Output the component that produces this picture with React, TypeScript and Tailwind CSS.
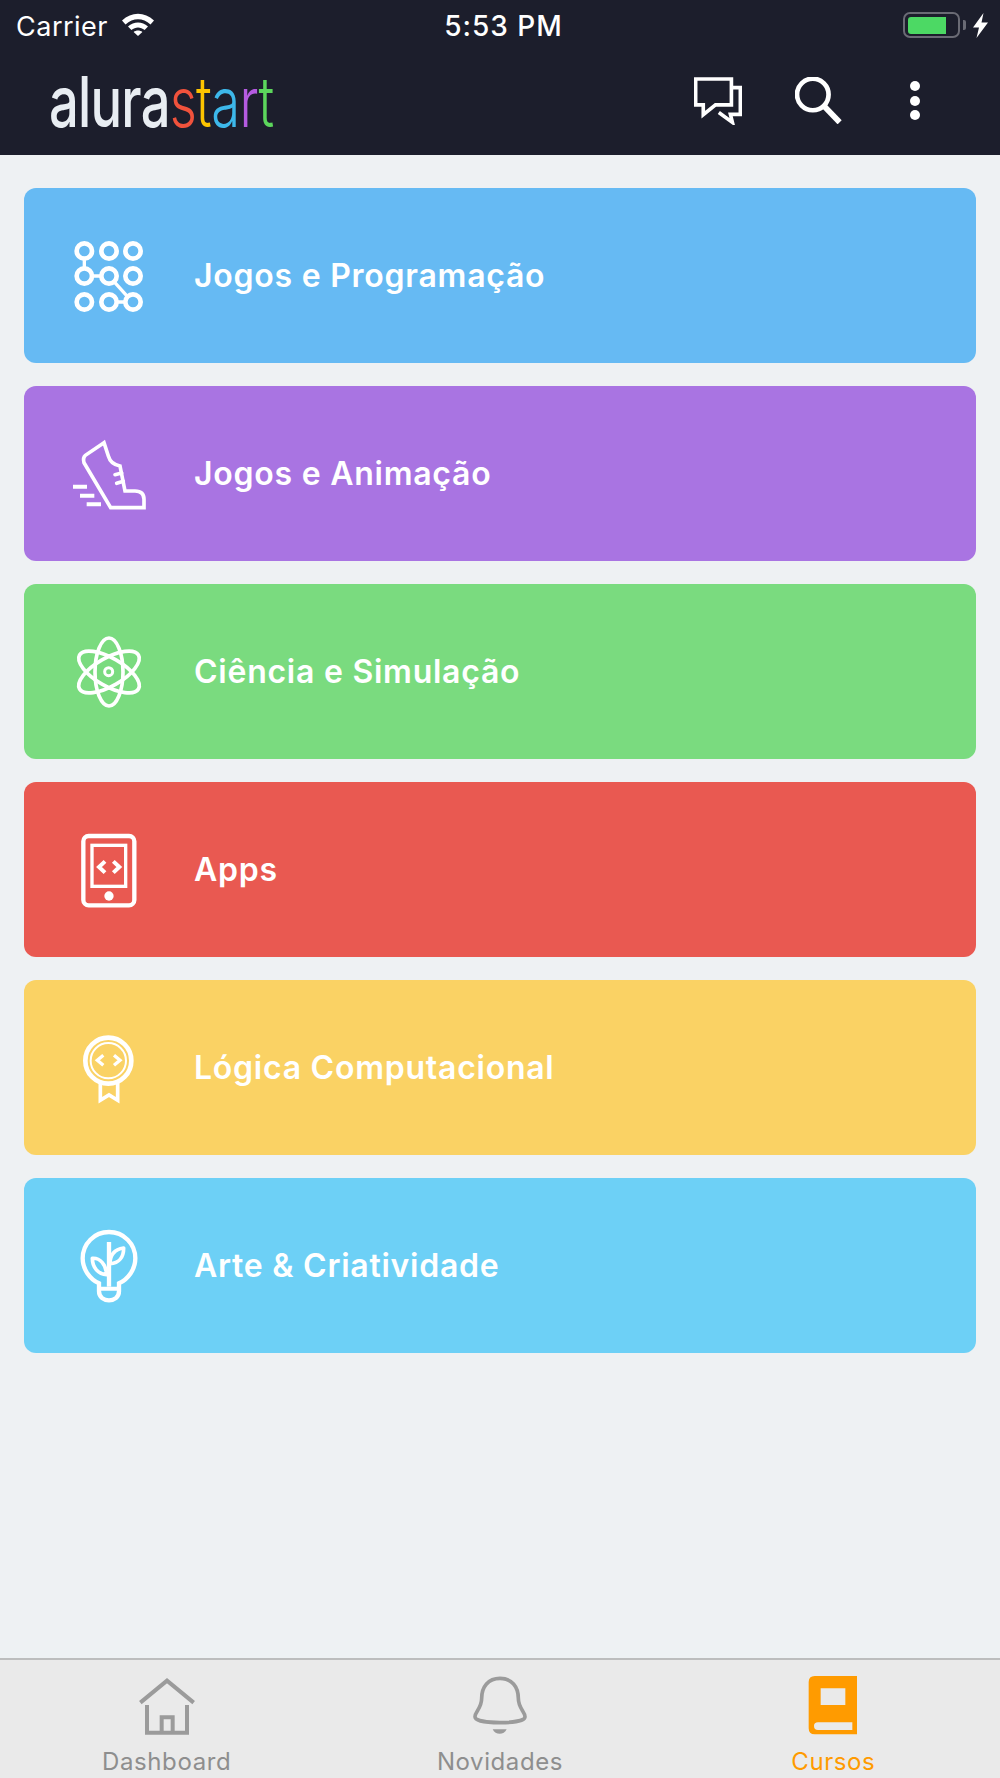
import React from "react";

const white = { fill: "none", stroke: "#fff", strokeLinejoin: "round" as const, strokeLinecap: "round" as const };

function Icon({ y, children }: { y: number; children: React.ReactNode }) {
  return (
    <svg viewBox={`87 ${y} 240 240`} className="w-20 h-20 shrink-0 overflow-visible">
      {children}
    </svg>
  );
}

const IconPattern = () => (
  <Icon y={45}>
    <g {...white} strokeWidth={14}>
      <circle cx={133} cy={90} r={23} />
      <circle cx={207} cy={90} r={23} />
      <circle cx={279} cy={90} r={23} />
      <circle cx={133} cy={165} r={23} />
      <circle cx={207} cy={165} r={23} />
      <circle cx={279} cy={165} r={23} />
      <circle cx={133} cy={243} r={23} />
      <circle cx={207} cy={243} r={23} />
      <circle cx={279} cy={243} r={23} />
      <path d="M133 113V142M156 165H184M222 182L262 226M230 243H256" strokeWidth={10} />
    </g>
  </Icon>
);

const IconShoe = () => (
  <Icon y={39}>
    <g {...white} strokeWidth={11}>
      <path d="M192 65L136 103Q128 110 132 125L212 260H312V235Q312 210 285 210H255L240 135Q212 130 205 105Z" strokeLinejoin="miter" />
      <path d="M225 161L245 156M230 187L250 181" />
      <path d="M99 197H141M120 224H163M140 250H183" strokeLinecap="butt" strokeWidth={12} />
    </g>
  </Icon>
);

const IconAtom = () => (
  <Icon y={33}>
    <g {...white} strokeWidth={11}>
      <ellipse cx={207} cy={153} rx={42} ry={102} />
      <ellipse cx={207} cy={153} rx={42} ry={102} transform="rotate(60 207 153)" />
      <ellipse cx={207} cy={153} rx={42} ry={102} transform="rotate(-60 207 153)" />
      <circle cx={206} cy={152} r={12} strokeWidth={9} />
    </g>
  </Icon>
);

const IconTablet = () => (
  <Icon y={27}>
    <g {...white} strokeWidth={13}>
      <rect x={130} y={45} width={153} height={208} rx={16} />
      <rect x={156} y={73} width={101} height={123} strokeWidth={10} strokeLinejoin="miter" />
      <path d="M195 121L177 138L195 155M220 121L238 138L220 155" strokeWidth={12} strokeLinecap="butt" strokeLinejoin="miter" />
    </g>
    <circle cx={207} cy={225} r={14} fill="#fff" />
  </Icon>
);

const IconMedal = () => (
  <Icon y={21}>
    <g {...white}>
      <circle cx={205} cy={119} r={69} strokeWidth={14} />
      <circle cx={205} cy={119} r={53} strokeWidth={6} />
      <path d="M190 103L172 118L190 133M222 103L240 118L222 133" strokeWidth={10} strokeLinecap="butt" strokeLinejoin="miter" />
      <path d="M181 185V238L207 222L233 238V185" strokeWidth={11} strokeLinecap="butt" strokeLinejoin="miter" />
    </g>
  </Icon>
);

const IconBulb = () => (
  <Icon y={30}>
    <g {...white} strokeWidth={13}>
      <path d="M177 202C150 190 128 160 128 127C128 83 163 48 207 48C251 48 286 83 286 127C286 160 264 190 237 202V226C237 262 177 262 177 226V202Z" strokeLinejoin="miter" />
      <path d="M177 218H237" strokeWidth={12} />
      <path d="M207 78V212" strokeWidth={13} strokeLinecap="butt" />
      <path d="M210 143C210 115 225 100 251 96C251 122 238 142 210 143Z" strokeWidth={11} />
      <path d="M157 127C180 125 198 145 200 176C175 175 157 155 157 127Z" strokeWidth={11} />
    </g>
  </Icon>
);

const categories = [
  { title: "Jogos e Programação", bg: "bg-[#66baf3]", icon: <IconPattern /> },
  { title: "Jogos e Animação", bg: "bg-[#a974e2]", icon: <IconShoe /> },
  { title: "Ciência e Simulação", bg: "bg-[#7adb7f]", icon: <IconAtom /> },
  { title: "Apps", bg: "bg-[#e95951]", icon: <IconTablet /> },
  { title: "Lógica Computacional", bg: "bg-[#fad264]", icon: <IconMedal /> },
  { title: "Arte & Criatividade", bg: "bg-[#6dd0f6]", icon: <IconBulb /> },
];

function StatusBar() {
  return (
    <div className="h-[50px] flex items-center text-white text-[27px] leading-none pt-[2px]">
      <div className="flex-1 flex items-center pl-4">
        <span className="font-normal tracking-[0.5px]">Carrier</span>
        <svg viewBox="0 0 34 24" className="w-[34px] h-6 ml-[13px] -mt-1">
          <path d="M1 8.5C10.5 -0.5 23.5 -0.5 33 8.5L29.5 12.5C22 5.5 12 5.5 4.5 12.5Z" fill="#fff" />
          <path d="M7 14.5C13 9 21 9 27 14.5L23.6 18C19.5 14.5 14.5 14.5 10.4 18Z" fill="#fff" />
          <path d="M12.6 20C15 18 19 18 21.4 20L17 24Z" fill="#fff" />
        </svg>
      </div>
      <span className="font-medium text-[28px] tracking-[1px] ml-[3px]">5:53 PM</span>
      <div className="flex-1 flex items-center justify-end pr-3 -mt-[2px]">
        <div className="w-[57px] h-[26px] rounded-[7px] border-2 border-[#6a6b75] p-[3px]">
          <div className="w-[38px] h-[17px] rounded-l-[3px] bg-[#4cd964]" />
        </div>
        <div className="w-[3px] h-[10px] ml-[3px] rounded-r-[2px] bg-[#6a6b75]" />
        <svg viewBox="0 0 15 25" className="w-[15px] h-[25px] ml-[7px]">
          <path d="M10.5 0L0 14.5H6L3.5 25L15 9.5H8.5Z" fill="#fff" />
        </svg>
      </div>
    </div>
  );
}

function Logo() {
  return (
    <div className="w-[226px] h-[70px] overflow-visible font-['Inter',sans-serif] mt-[2px]">
      <div className="origin-left scale-x-[0.75] w-max text-[70px] leading-[70px] font-normal tracking-[-1px] whitespace-nowrap">
        <span className="text-[#e8edf2] font-medium">alura</span>
        <span className="text-[#f0523c] font-light">s</span>
        <span className="text-[#fdc400] font-light">t</span>
        <span className="text-[#3db8ea] font-light">a</span>
        <span className="text-[#b45be0] font-light">r</span>
        <span className="text-[#5cd65c] font-light">t</span>
      </div>
    </div>
  );
}

function Header() {
  return (
    <div className="h-[105px] flex items-center pl-[49px] pb-[4px]">
      <Logo />
      <div className="ml-auto flex items-center mr-[80px]">
        <svg viewBox="580 232 145 143" className="w-[48px] h-[48px]">
          <g fill="none" stroke="#fff" strokeWidth={11} strokeLinejoin="miter">
            <path d="M585 237H693V315H645L608 345V315H585Z" />
            <path d="M695 263H720V344H690L696 368L655 338" />
          </g>
        </svg>
        <svg viewBox="885 233 140 140" className="w-[47px] h-[47px] ml-[53px]">
          <circle cx={938} cy={285} r={47} fill="none" stroke="#fff" strokeWidth={14} />
          <path d="M972 320L1018 368" stroke="#fff" strokeWidth={17} />
        </svg>
        <svg viewBox="0 0 10 40" className="w-[10px] h-10 ml-[68px]">
          <circle cx={5} cy={5} r={5} fill="#fff" />
          <circle cx={5} cy={20} r={5} fill="#fff" />
          <circle cx={5} cy={34} r={5} fill="#fff" />
        </svg>
      </div>
    </div>
  );
}

function Card({ title, bg, icon }: { title: string; bg: string; icon: React.ReactNode }) {
  return (
    <div className={`${bg} h-[175px] rounded-[12px] flex items-center pl-[45px] gap-[45px]`}>
      {icon}
      <span className="text-white text-[32px] tracking-[0.75px] font-semibold leading-none">{title}</span>
    </div>
  );
}

function TabBar() {
  const gray = { fill: "none", stroke: "#9b9b9b" };
  return (
    <div className="h-[120px] bg-[#eaeaea] border-t-2 border-[#bdbdbd] grid grid-cols-3 pt-[15px] overflow-hidden text-[24px] leading-[28px] tracking-[0.6px]">
      <div className="flex flex-col items-center text-[#8e8e8e]">
        <svg viewBox="228 75 180 180" className="w-[60px] h-[60px]">
          <g {...gray} strokeWidth={12}>
            <path d="M238 158L318 92L398 158" />
            <path d="M258 165V248H378V165" />
            <path d="M302 248V202H335V248" />
          </g>
        </svg>
        <span className="mt-[13px]">Dashboard</span>
      </div>
      <div className="flex flex-col items-center text-[#8e8e8e]">
        <svg viewBox="1230 75 180 180" className="w-[60px] h-[60px]">
          <path d="M1320 85C1285 85 1265 110 1265 145C1265 175 1245 185 1245 200C1245 224 1395 224 1395 200C1395 185 1375 175 1375 145C1375 110 1355 85 1320 85Z" {...gray} strokeWidth={11} />
          <path d="M1298 238H1340C1332 256 1306 256 1298 238Z" fill="#9b9b9b" />
        </svg>
        <span className="mt-[13px]">Novidades</span>
      </div>
      <div className="flex flex-col items-center text-[#ff9b00]">
        <svg viewBox="310 75 180 180" className="w-[60px] h-[60px]">
          <path
            fillRule="evenodd"
            fill="#ff9b00"
            d="M345 78H472V253H345Q327 253 327 235V96Q327 78 345 78ZM363 115V165H437V115ZM355 217Q343 217 343 228Q343 240 355 240H458V217Z"
          />
        </svg>
        <span className="mt-[13px]">Cursos</span>
      </div>
    </div>
  );
}

export default function App() {
  return (
    <div className="w-[1000px] h-[1778px] flex flex-col bg-[#eef1f3] font-['Inter',sans-serif] overflow-hidden">
      <div className="bg-[#1c1e2c]">
        <StatusBar />
        <Header />
      </div>
      <div className="flex-1 flex flex-col gap-[23px] px-[24px] pt-[33px]">
        {categories.map((c) => (
          <Card key={c.title} {...c} />
        ))}
      </div>
      <TabBar />
    </div>
  );
}
